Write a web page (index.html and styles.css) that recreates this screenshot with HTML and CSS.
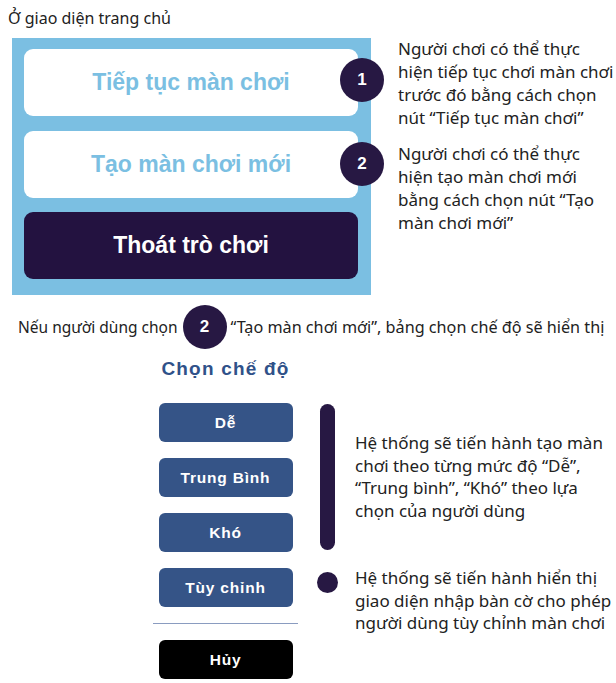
FILE: index.html
```html
<!DOCTYPE html>
<html lang="vi">
<head>
<meta charset="utf-8">
<link rel="stylesheet" href="styles.css">
</head>
<body>
<p class="intro">Ở giao diện trang chủ</p>
<section class="home">
  <div class="panel">
    <div class="btn light">Tiếp tục màn chơi</div>
    <div class="btn light">Tạo màn chơi mới</div>
    <div class="btn dark">Thoát trò chơi</div>
    <span class="badge b1">1</span>
    <span class="badge b2">2</span>
  </div>
  <div class="notes">
    <p class="note n1">Người chơi có thể thực hiện tiếp tục chơi màn chơi trước đó bằng cách chọn nút “Tiếp tục màn chơi”</p>
    <p class="note n2">Người chơi có thể thực hiện tạo màn chơi mới bằng cách chọn nút “Tạo màn chơi mới”</p>
  </div>
</section>
<p class="sentence"><span class="lead">Nếu người dùng chọn</span><span class="badge inline">2</span><span>“Tạo màn chơi mới”, bảng chọn chế độ sẽ hiển thị</span></p>
<section class="modes">
  <div class="dialog">
    <h2 class="title">Chọn chế độ</h2>
    <div class="mode">Dễ</div>
    <div class="mode">Trung Bình</div>
    <div class="mode">Khó</div>
    <div class="mode">Tùy chỉnh</div>
    <div class="sep"></div>
    <div class="mode cancel">Hủy</div>
  </div>
  <div class="explain">
    <div class="row r1">
      <span class="bar"></span>
      <p class="etext">Hệ thống sẽ tiến hành tạo màn chơi theo từng mức độ “Dễ”, “Trung bình”, “Khó” theo lựa chọn của người dùng</p>
    </div>
    <div class="row r2">
      <span class="dot"></span>
      <p class="etext">Hệ thống sẽ tiến hành hiển thị giao diện nhập bàn cờ cho phép người dùng tùy chỉnh màn chơi</p>
    </div>
  </div>
</section>
</body>
</html>
```
FILE: styles.css
```css
* { box-sizing: border-box; }
body {
  margin: 0;
  width: 616px;
  height: 683px;
  overflow: hidden;
  background: #fff;
  font-family: "Noto Sans", "Open Sans", sans-serif;
  color: #222;
}
p { margin: 0; }
.intro {
  font-size: 16px;
  line-height: 20px;
  padding: 8px 0 0 8px;
  height: 38px;
}
.home {
  display: flex;
  align-items: flex-start;
}
.panel {
  position: relative;
  margin-left: 12px;
  width: 359px;
  height: 257px;
  background: #7bbfe2;
  padding: 11px 13px 16px 12px;
  display: flex;
  flex-direction: column;
  gap: 15px;
}
.btn {
  height: 67px;
  border-radius: 9px;
  display: flex;
  align-items: center;
  justify-content: center;
  font-family: "Liberation Sans", Arial, sans-serif;
  font-weight: bold;
  font-size: 23px;
}
.btn.light { background: #fff; color: #7bbfe2; }
.btn.dark { background: #231240; color: #fff; margin-top: -1px; }
.badge {
  width: 44px;
  height: 44px;
  border-radius: 50%;
  background: #271843;
  color: #fff;
  font-family: "Liberation Sans", Arial, sans-serif;
  font-weight: bold;
  font-size: 17px;
  display: flex;
  align-items: center;
  justify-content: center;
}
.panel .badge { position: absolute; left: 328px; }
.b1 { top: 20px; }
.b2 { top: 104px; }
.notes {
  margin-left: 27px;
  margin-top: -1px;
  display: flex;
  flex-direction: column;
  gap: 13px;
}
.note {
  font-size: 17px;
  line-height: 23px;
  width: 216px;
  color: #222;
}
.sentence {
  display: flex;
  align-items: center;
  margin-top: 10px;
  padding-left: 18px;
  height: 44px;
  font-size: 16.2px;
  white-space: nowrap;
}
.sentence .lead { font-size: 15.5px; }
.sentence .badge.inline { margin: 0 4px 0 5px; flex: none; }
.modes {
  display: flex;
  margin-top: 6px;
}
.dialog {
  margin-left: 153px;
  width: 145px;
  display: flex;
  flex-direction: column;
  align-items: center;
}
.title {
  margin: 0;
  height: 48px;
  padding-top: 3px;
  font-family: "Liberation Sans", Arial, sans-serif;
  font-weight: bold;
  font-size: 19px;
  letter-spacing: 1.2px;
  color: #2f5189;
  line-height: 22px;
}
.mode {
  width: 134px;
  height: 39px;
  border-radius: 6px;
  background: #355487;
  color: #fff;
  font-family: "Liberation Sans", Arial, sans-serif;
  font-weight: bold;
  font-size: 15.5px;
  letter-spacing: 0.8px;
  display: flex;
  align-items: center;
  justify-content: center;
  margin-bottom: 16px;
}
.sep {
  width: 145px;
  height: 1px;
  background: #8a9cc0;
  margin: 0 0 16px;
}
.mode.cancel { background: #000; }
.explain {
  margin-left: 22px;
  padding-top: 49px;
}
.row { display: flex; align-items: flex-start; }
.bar {
  width: 15px;
  height: 146px;
  border-radius: 8px;
  background: #271843;
  flex: none;
}
.r1 .etext { margin-top: 28px; margin-left: 20px; }
.r2 { margin-top: 22px; }
.dot {
  width: 21px;
  height: 21px;
  border-radius: 50%;
  background: #271843;
  margin-left: -3px;
  flex: none;
}
.r2 .etext { margin-left: 17px; margin-top: -5px; }
.etext {
  font-size: 17px;
  line-height: 22.5px;
  width: 259px;
  color: #222;
}
```
